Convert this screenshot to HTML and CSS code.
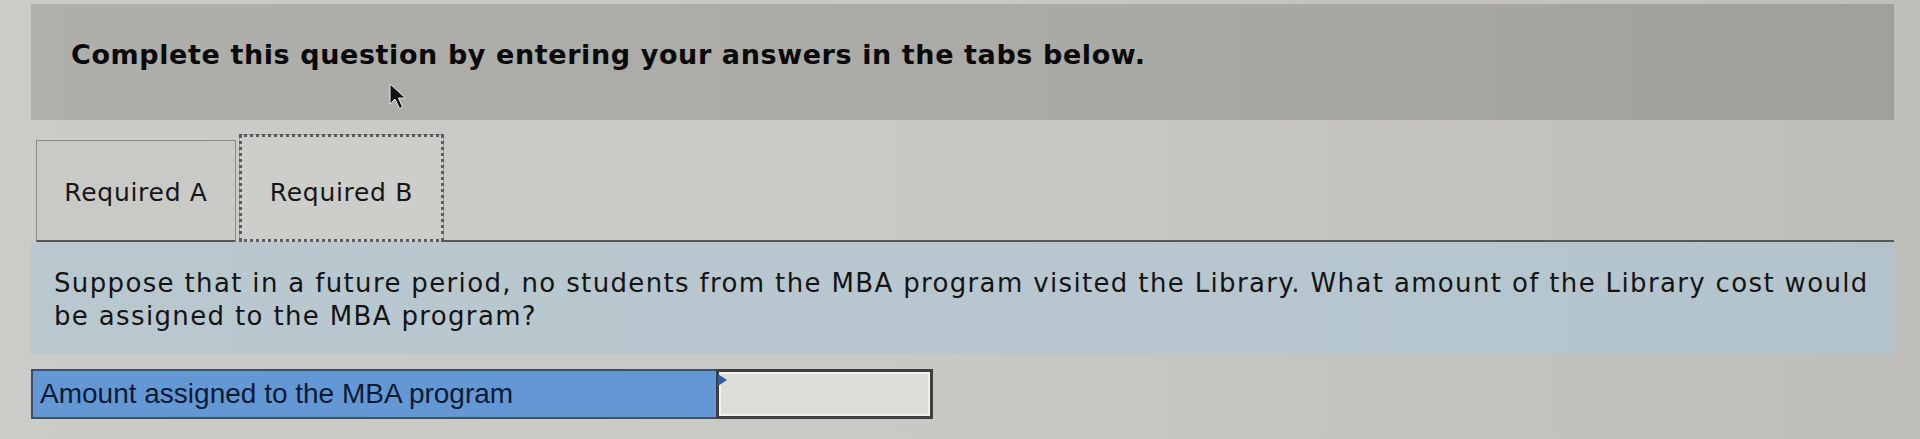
FILE: index.html
```html
<!DOCTYPE html>
<html lang="en">
<head>
<meta charset="utf-8">
<title>Required B</title>
<link rel="stylesheet" href="styles.css">
</head>
<body>
<div class="page">
  <div class="banner">
    <h1 class="heading">Complete this question by entering your answers in the tabs below.</h1>
    <svg class="cursor" width="20" height="28" viewBox="0 0 20 28"><path d="M1 1 L1 21 L6 16 L10.5 25.5 L13.5 24 L9.5 15 L16.5 15 Z" fill="#111" stroke="#e8e8e8" stroke-width="1"/></svg>
  </div>
  <div class="tabs">
    <div class="tab tab-a">Required A</div>
    <div class="tab tab-b">Required B</div>
    <div class="tab-fill"></div>
  </div>
  <div class="question">
    <p class="qtext">Suppose that in a future period, no students from the MBA program visited the Library. What amount of the Library cost would be assigned to the MBA program?</p>
  </div>
  <div class="answer">
    <div class="label">Amount assigned to the MBA program</div>
    <div class="input"><span class="marker"></span></div>
  </div>
</div>
</body>
</html>
```

FILE: styles.css
```css
html, body {
  margin: 0;
  padding: 0;
}
body {
  background: linear-gradient(90deg, #cbcbc7 0%, #c8c8c4 50%, #bebdb9 100%);
  width: 1920px;
  height: 439px;
  overflow: hidden;
  font-family: "DejaVu Sans", Verdana, sans-serif;
  color: #141414;
}
.page {
  margin-left: 31px;
  width: 1863px;
  padding-top: 4px;
}
.banner {
  position: relative;
  height: 116px;
  background: linear-gradient(90deg, #afafab 0%, #a9a9a5 60%, #a09f9b 100%);
  display: flex;
  align-items: flex-start;
}
.heading {
  margin: 36px 0 0 40px;
  font-size: 27px;
  font-weight: bold;
  line-height: 30px;
  color: #0a0a0a;
  letter-spacing: 0.6px;
}
.cursor {
  position: absolute;
  left: 358px;
  top: 79px;
}
.tabs {
  display: flex;
  align-items: flex-end;
  height: 122px;
  padding-left: 5px;
}
.tab {
  box-sizing: border-box;
  height: 102px;
  display: flex;
  align-items: center;
  justify-content: center;
  font-size: 25px;
  letter-spacing: 0.7px;
  color: #161616;
}
.tab-a {
  width: 200px;
  background: #c9c9c5;
  border: 1px solid #8a8a88;
  border-bottom: 2px solid #555;
  padding-top: 4px;
}
.tab-b {
  width: 205px;
  height: 108px;
  margin-left: 3px;
  background: #cdcdc9;
  border: 1px solid #9a9a98;
  border-bottom: none;
  outline: 3px dotted #5a5a60;
  outline-offset: -3px;
  padding-top: 8px;
}
.tab-fill {
  flex: 1;
  border-bottom: 2px solid #575757;
}
.question {
  background: linear-gradient(90deg, #b9c8cf 0%, #b8c7cf 60%, #b3c3cc 100%);
  padding: 25px 20px 21px 23px;
}
.qtext {
  margin: 0;
  font-size: 26px;
  line-height: 33px;
  letter-spacing: 1.35px;
  color: #141414;
}
.answer {
  display: flex;
  margin-top: 15px;
  width: 902px;
  height: 50px;
}
.label {
  box-sizing: border-box;
  width: 685px;
  background: #6498d4;
  border: 2px solid #3a4f6a;
  border-right: none;
  padding-left: 7px;
  display: flex;
  align-items: center;
  font-family: "Liberation Sans", Arial, sans-serif;
  font-size: 28px;
  letter-spacing: 0;
  color: #0c1a33;
}
.input {
  position: relative;
  box-sizing: border-box;
  flex: 1;
  background: #dcdcd9;
  border: 3px solid #3f3f3f;
  box-shadow: inset 0 0 0 2px #f2f2f0;
}
.marker {
  position: absolute;
  left: -1px;
  top: 2px;
  width: 0;
  height: 0;
  border-top: 6px solid transparent;
  border-bottom: 6px solid transparent;
  border-left: 9px solid #2f5f9f;
}
```
